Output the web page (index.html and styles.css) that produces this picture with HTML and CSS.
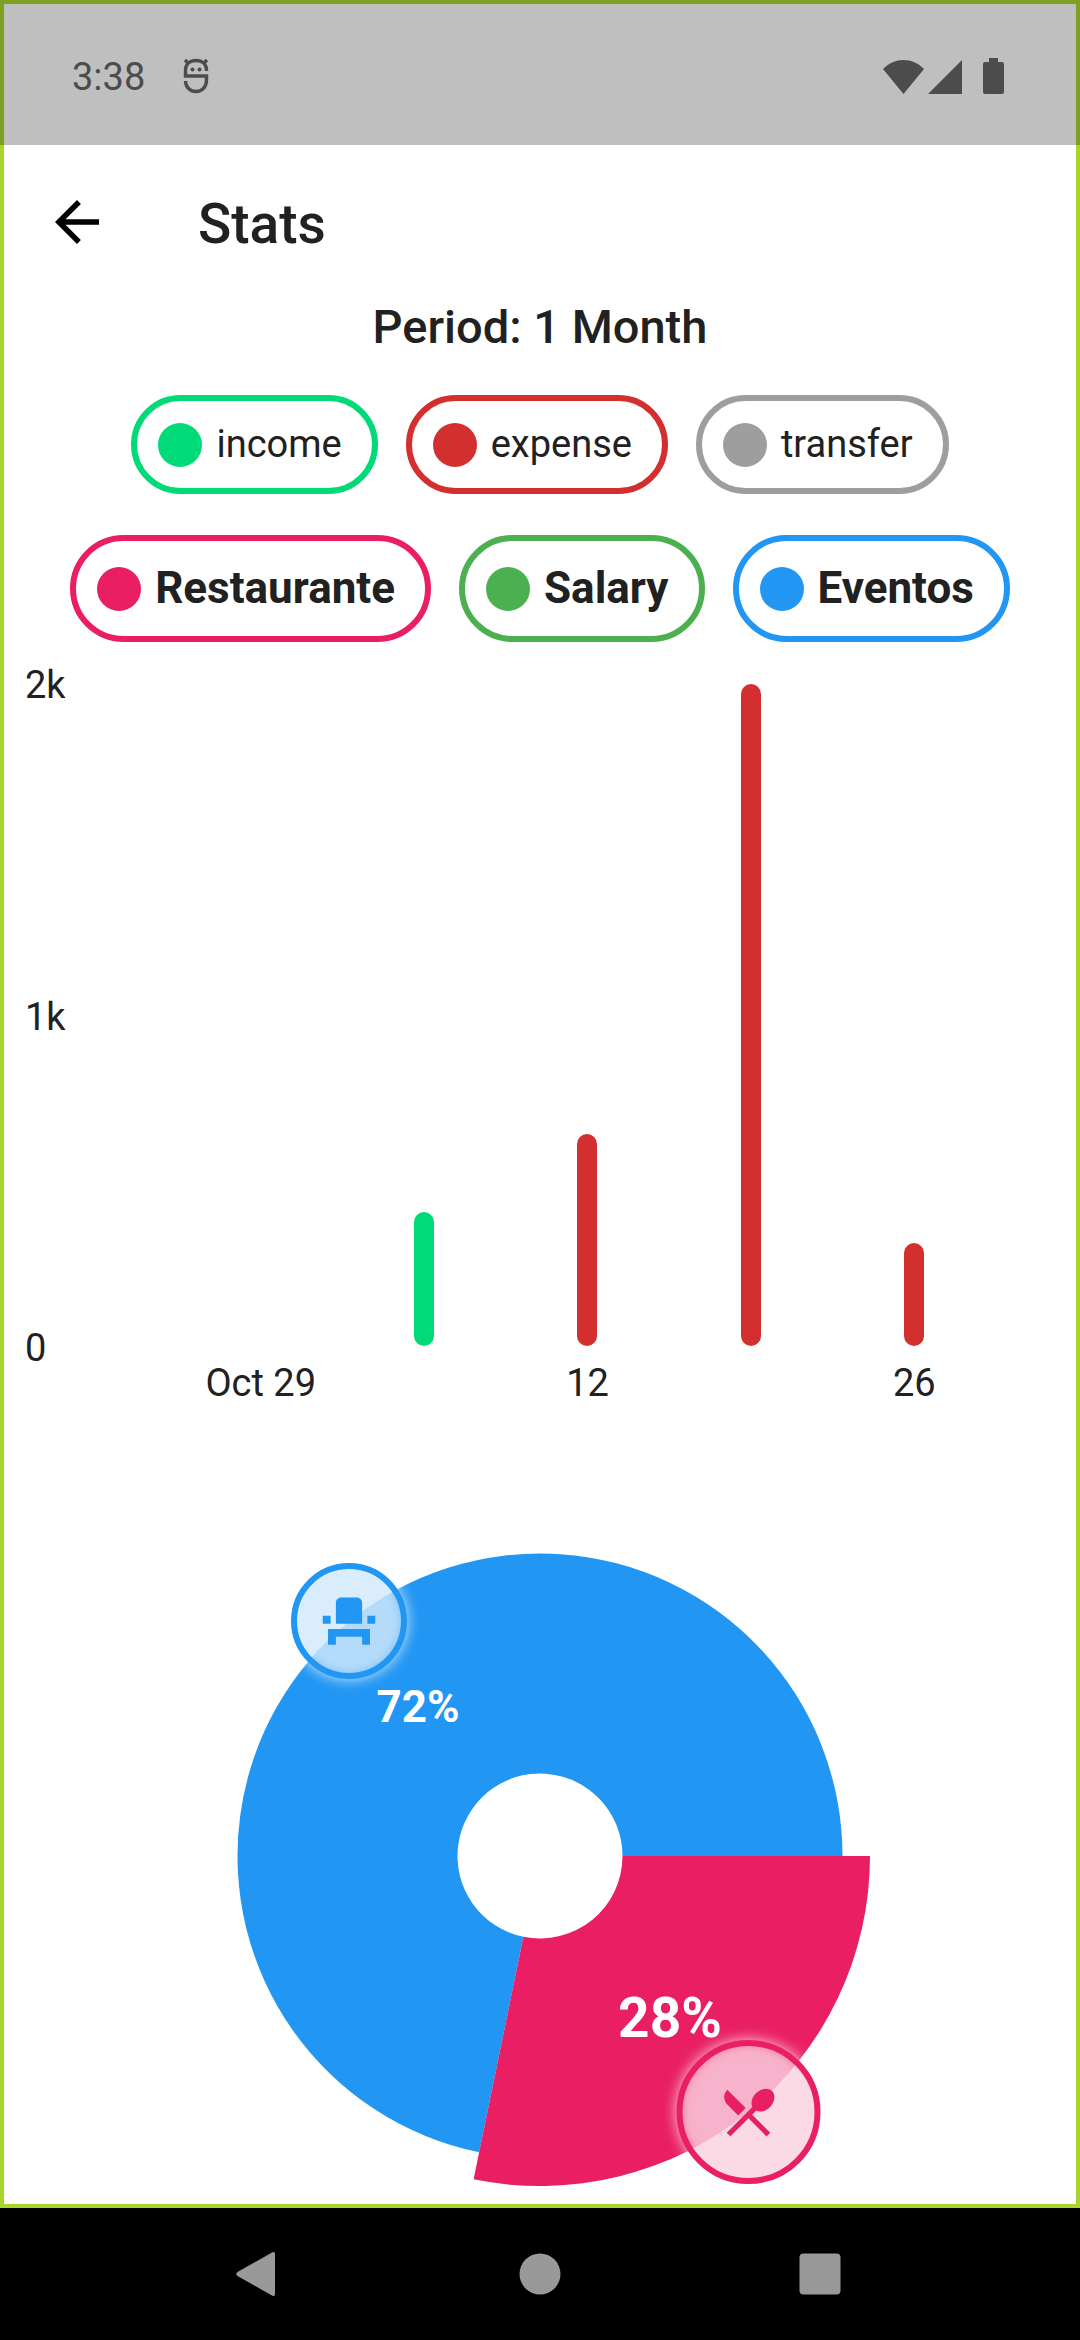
FILE: index.html
```html
<!DOCTYPE html>
<html lang="en">
<head>
<meta charset="utf-8">
<meta name="viewport" content="width=device-width, initial-scale=1">
<title>Stats</title>
<link rel="stylesheet" href="styles.css">
</head>
<body>
<div class="screen">
  <div class="status-bar">
    <span class="clock">3:38</span>
    <svg class="status-app" width="26" height="36" viewBox="0 0 26 36" aria-hidden="true">
      <g fill="none" stroke="currentColor" stroke-width="3.400">
        <path d="M23.500 13V12.500C23.500 6 19 2.500 13 2.500S2.500 6 2.500 12.500V18H23.500V22C23.500 29 19 33.500 13 33.500S2.500 29 2.500 23"/>
        <path d="M2 2L6 6M24 2L20 6"/>
      </g>
      <circle cx="9.500" cy="11.500" r="2" fill="currentColor"/>
      <circle cx="16.500" cy="11.500" r="2" fill="currentColor"/>
    </svg>
    <div class="status-icons">
      <svg width="41" height="36" viewBox="0 0 41 36" aria-hidden="true"><path fill="currentColor" d="M0 11C6 5 13 2 20.500 2S35 5 41 11L20.500 36z"/></svg>
      <svg class="signal" width="35" height="36" viewBox="0 0 35 36" aria-hidden="true"><path fill="currentColor" d="M34 2V36H0z"/></svg>
      <svg width="21" height="36" viewBox="0 0 21 36" aria-hidden="true"><path fill="currentColor" d="M6 0h9v4h4a2 2 0 0 1 2 2v28a2 2 0 0 1-2 2H2a2 2 0 0 1-2-2V6a2 2 0 0 1 2-2h4z"/></svg>
    </div>
  </div>

  <header class="app-bar">
    <button class="back" type="button" aria-label="Back">
      <svg width="66" height="66" viewBox="0 0 24 24" aria-hidden="true"><path d="M20 11H7.830l5.590-5.590L12 4l-8 8 8 8 1.410-1.410L7.830 13H20v-2z"/></svg>
    </button>
    <h1 class="title">Stats</h1>
  </header>

  <main class="content">
    <h2 class="period">Period: 1 Month</h2>
    <ul class="legend">
      <li class="chip income">income</li>
      <li class="chip expense">expense</li>
      <li class="chip transfer">transfer</li>
    </ul>
    <ul class="legend categories">
      <li class="chip restaurante">Restaurante</li>
      <li class="chip salary">Salary</li>
      <li class="chip eventos">Eventos</li>
    </ul>

    <section class="bar-chart" aria-label="Amounts by week">
      <div class="y-axis"><span>2k</span><span>1k</span><span>0</span></div>
      <div class="bars">
        <span></span>
        <span class="bar income" style="height:20.300%"></span>
        <span class="bar expense" style="height:32%"></span>
        <span class="bar expense" style="height:100%"></span>
        <span class="bar expense" style="height:15.600%"></span>
      </div>
      <div class="x-axis"><span>Oct 29</span><span></span><span>12</span><span></span><span>26</span></div>
    </section>

    <svg class="pie" viewBox="0 0 680 648" role="img" aria-label="Eventos 72%, Restaurante 28%">
      <defs>
        <filter id="glow" x="-50%" y="-50%" width="200%" height="200%"><feGaussianBlur stdDeviation="7"/></filter>
      </defs>
      <path class="fill-eventos" d="M279.200 607.300A302.500 302.500 0 1 1 642.500 311H422.500A82.500 82.500 0 1 0 323.400 391.800z"/>
      <path class="fill-restaurante" d="M670 311A330 330 0 0 1 273.600 634.300L323.400 391.800A82.500 82.500 0 0 0 422.500 311z"/>
      <text class="share" x="218" y="177">72%</text>
      <text class="share large" x="470" y="492">28%</text>
      <g transform="translate(149 76)">
        <circle class="halo" r="58"/>
        <circle class="badge eventos" r="55"/>
        <svg class="fill-eventos" x="-31.500" y="-31.500" width="63" height="63" viewBox="0 0 24 24"><path d="M4 18v3h3v-3h10v3h3v-6H4zm15-8h3v3h-3zM2 10h3v3H2zm15 3H7V5c0-1.100.9-2 2-2h6c1.100 0 2 .9 2 2v8z"/></svg>
      </g>
      <g transform="translate(548.500 567)">
        <circle class="halo" r="72"/>
        <circle class="badge restaurante" r="69"/>
        <svg class="fill-restaurante" x="-31.500" y="-31.500" width="63" height="63" viewBox="0 0 24 24"><path d="M8.100 13.340l2.830-2.830L3.910 3.500c-1.560 1.560-1.560 4.090 0 5.660l4.190 4.180zm6.780-1.810c1.530.71 3.680.21 5.270-1.380 1.910-1.910 2.280-4.650.81-6.120-1.460-1.460-4.200-1.100-6.120.81-1.590 1.590-2.090 3.740-1.380 5.270L3.700 19.870l1.410 1.410L12 14.410l6.880 6.880 1.410-1.410L13.410 13l1.470-1.470z"/></svg>
      </g>
    </svg>
  </main>
</div>

<nav class="nav-bar" aria-label="System">
  <button type="button" aria-label="Back"><svg width="48" height="48" viewBox="0 0 48 48" aria-hidden="true"><path d="M36 2.500Q39 1 39 4V44Q39 47 36 45.500L1.500 26Q-1 24 1.500 22z"/></svg></button>
  <button type="button" aria-label="Home"><svg width="48" height="48" viewBox="0 0 48 48" aria-hidden="true"><circle cx="24" cy="24" r="20.500"/></svg></button>
  <button type="button" aria-label="Recent apps"><svg width="48" height="48" viewBox="0 0 48 48" aria-hidden="true"><rect x="3.500" y="3.500" width="41" height="41" rx="4"/></svg></button>
</nav>
</body>
</html>
```
FILE: styles.css
```css
* {
  box-sizing: border-box;
}

:root {
  --text: #212121;
  --income: #00da77;
  --expense: #d32f2f;
  --transfer: #9e9e9e;
  --restaurante: #e91e63;
  --salary: #4caf50;
  --eventos: #2196f3;
}

body {
  display: flex;
  flex-direction: column;
  min-height: 100vh;
  margin: 0;
  background: #000;
  color: var(--text);
  font-family: Roboto, "Liberation Sans", sans-serif;
  font-size: 38px;
  line-height: 45px;
}

button {
  display: flex;
  padding: 0;
  border: 0;
  background: none;
}

.screen {
  flex: 1;
  border: 4px solid #a9d62b;
  background: #fff;
}

/* translucent strip, tints the frame beneath it too */
.status-bar {
  display: flex;
  align-items: center;
  height: 145px;
  margin: -4px -4px 0;
  padding: 7px 76px 0 72px;
  background: rgba(0, 0, 0, 0.25);
  color: #4c4c4c;
}

.clock {
  padding-top: 2px;
}

.status-app {
  margin-left: 38px;
}

.status-icons {
  display: flex;
  margin-left: auto;
}

.signal {
  margin: 0 20px 0 4px;
}

.app-bar {
  display: flex;
  align-items: center;
  gap: 88px;
  height: 154px;
  padding: 0 40px;
}

.title {
  margin: 0;
  padding-top: 4px;
  font-size: 55px;
  font-weight: 500;
  line-height: 64px;
}

.period {
  margin: 0 0 41px;
  font-size: 47px;
  font-weight: 500;
  line-height: 55px;
  text-align: center;
}

.legend {
  display: flex;
  flex-wrap: wrap;
  justify-content: center;
  gap: 28px;
  margin: 0 0 41px;
  padding: 0;
  list-style: none;
}

.categories {
  margin-bottom: 19px;
  font-size: 44px;
  font-weight: 700;
  line-height: 53px;
}

.chip {
  display: flex;
  align-items: center;
  gap: 14px;
  padding: 21px 30px 21px 21px;
  border: 6px solid var(--tone);
  border-radius: 54px;
}

.chip::before {
  content: "";
  width: 44px;
  height: 44px;
  border-radius: 50%;
  background: var(--tone);
}

.income { --tone: var(--income); }
.expense { --tone: var(--expense); }
.transfer { --tone: var(--transfer); }
.restaurante { --tone: var(--restaurante); }
.salary { --tone: var(--salary); }
.eventos { --tone: var(--eventos); }

.bar-chart {
  display: grid;
  grid-template-columns: 154px 1fr;
  grid-template-rows: 708px 45px;
  padding: 0 80px 0 21px;
}

.y-axis {
  display: flex;
  flex-direction: column;
  justify-content: space-between;
  margin-bottom: -2px;
  padding-top: 2px;
}

.bars,
.x-axis {
  display: grid;
  grid-template-columns: repeat(5, 1fr);
  justify-items: center;
}

.bars {
  grid-template-rows: 100%;
  align-items: end;
  padding: 23px 0;
}

.bar {
  width: 20px;
  border-radius: 10px;
  background: var(--tone);
}

.x-axis {
  grid-column: 2;
  margin-top: -8px;
}

.pie {
  display: block;
  width: 680px;
  max-width: 100%;
  margin: 131px auto 0;
}

.fill-eventos { fill: var(--eventos); }
.fill-restaurante { fill: var(--restaurante); }

.share {
  fill: #fff;
  font-size: 44px;
  font-weight: 700;
  text-anchor: middle;
}

.share.large {
  font-size: 55px;
}

.halo {
  fill: #fff;
  fill-opacity: 0.8;
  filter: url(#glow);
}

.badge {
  fill: var(--tone);
  fill-opacity: 0.17;
  stroke: var(--tone);
  stroke-width: 6px;
}

.nav-bar {
  display: flex;
  justify-content: center;
  align-items: center;
  gap: 40px;
  height: 132px;
  fill: #999;
}

.nav-bar button {
  justify-content: center;
  width: 240px;
}
```
